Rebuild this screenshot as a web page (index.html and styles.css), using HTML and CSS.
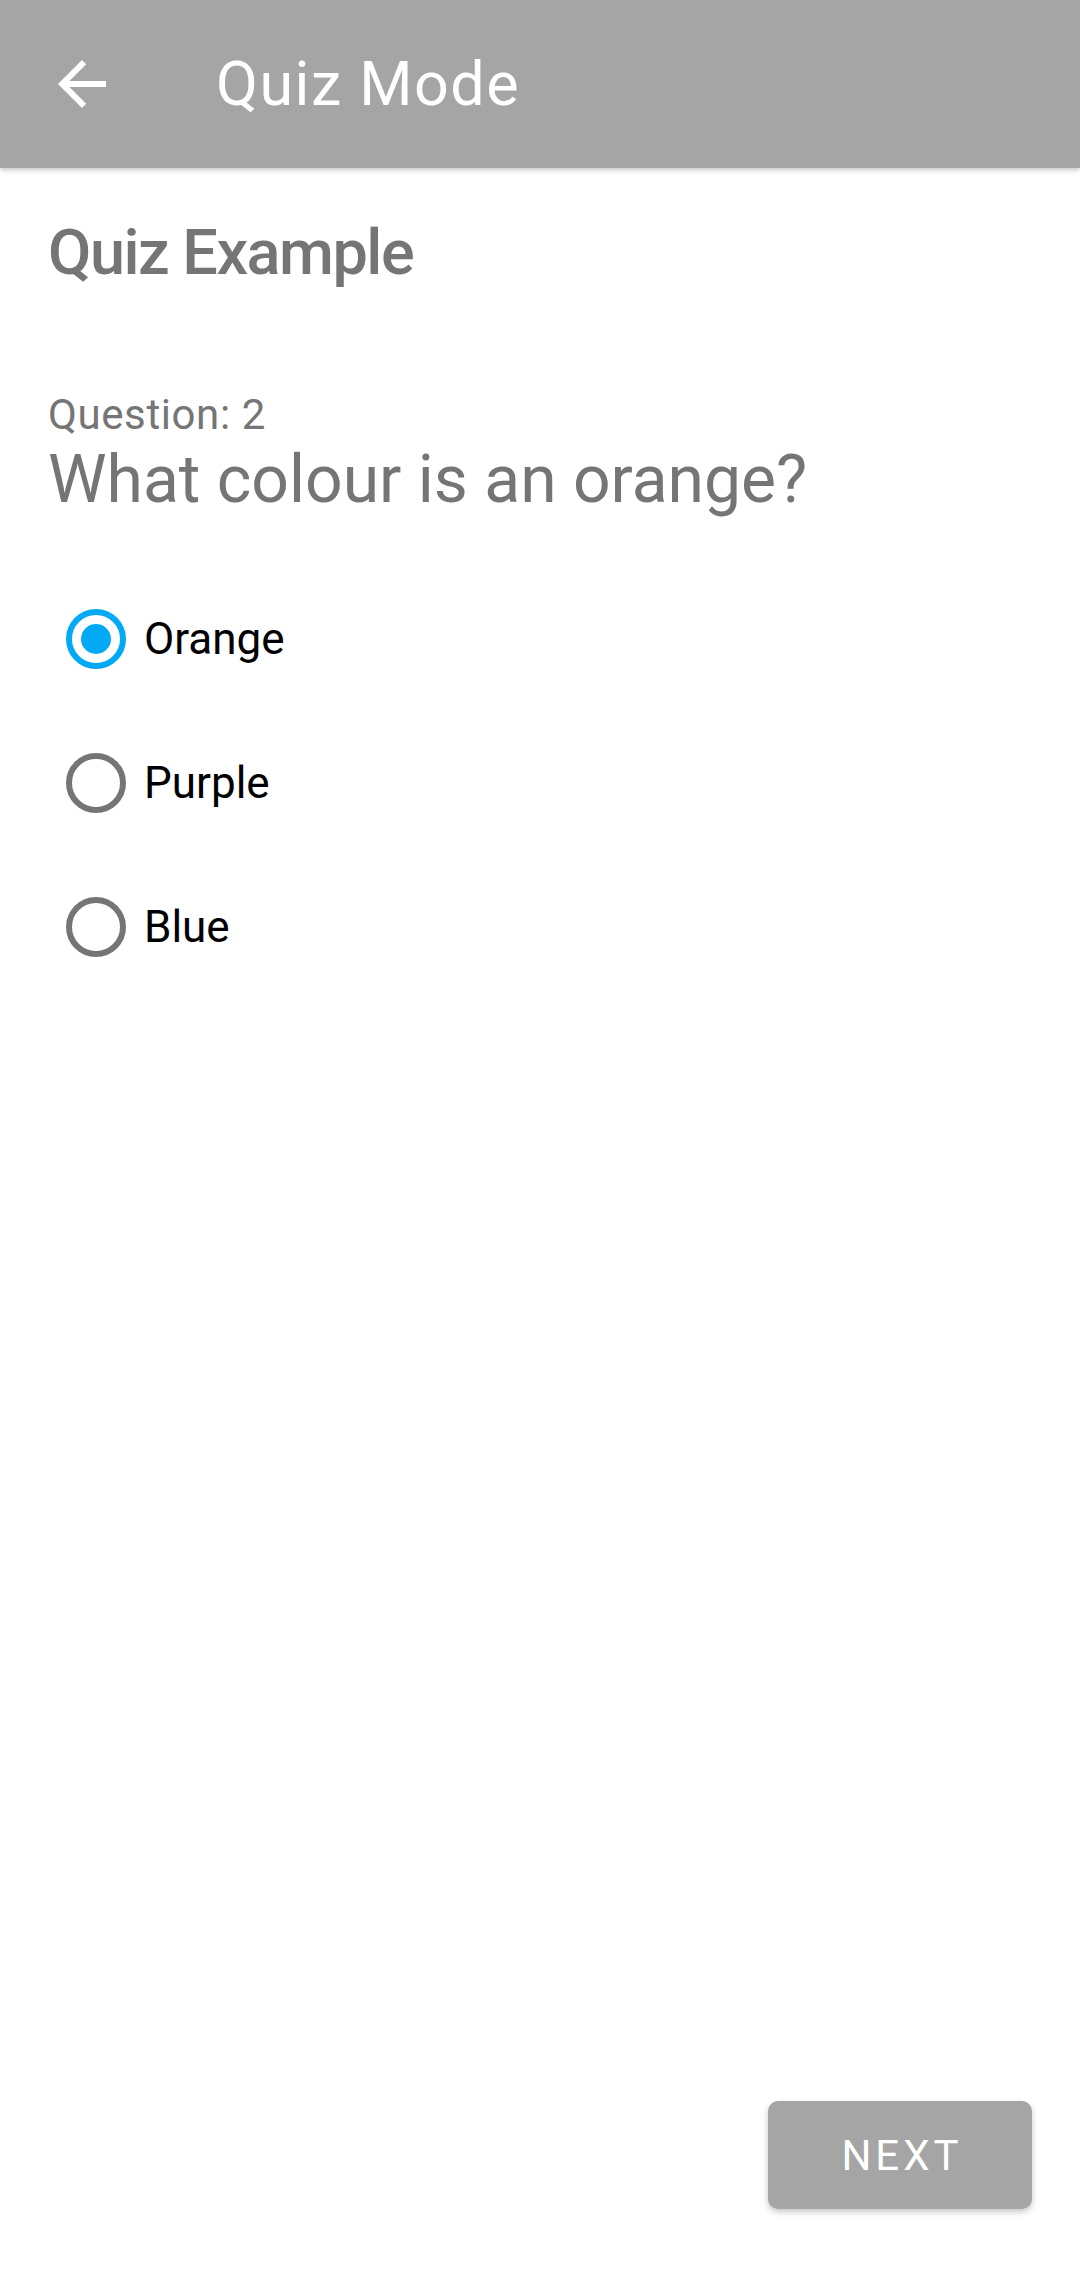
FILE: index.html
```html
<!DOCTYPE html>
<html>
<head>
<meta charset="utf-8">
<link rel="stylesheet" href="styles.css">
</head>
<body>
<div class="screen">
  <header class="appbar">
    <div class="nav-icon">
      <svg viewBox="0 0 24 24" width="72" height="72"><path fill="#fff" d="M20 11H7.83l5.59-5.59L12 4l-8 8 8 8 1.41-1.41L7.83 13H20v-2z"/></svg>
    </div>
    <div class="appbar-title">Quiz Mode</div>
  </header>
  <main class="content">
    <h1 class="quiz-title">Quiz Example</h1>
    <div class="q-label">Question: 2</div>
    <div class="q-text">What colour is an orange?</div>
    <div class="options">
      <div class="option"><span class="radio checked"><span class="dot"></span></span><span class="opt-label">Orange</span></div>
      <div class="option"><span class="radio"></span><span class="opt-label">Purple</span></div>
      <div class="option"><span class="radio"></span><span class="opt-label">Blue</span></div>
    </div>
  </main>
  <footer class="footer">
    <button class="next-btn">NEXT</button>
  </footer>
</div>
</body>
</html>
```
FILE: styles.css
```css
* { box-sizing: border-box; }
html, body { margin: 0; padding: 0; background: #fff; }
body { font-family: Roboto, "Noto Sans", sans-serif; }
.screen { width: 1080px; height: 2275px; display: flex; flex-direction: column; overflow: hidden; }
.appbar {
  height: 168px; background: #a5a5a5; display: flex; align-items: center;
  box-shadow: 0 2px 5px rgba(0,0,0,0.22); position: relative; z-index: 2; flex-shrink: 0;
}
.nav-icon { width: 72px; height: 72px; margin-left: 46px; display: flex; }
.appbar-title { margin-left: 98px; color: #fff; font-size: 61px; font-weight: 400; line-height: 1; letter-spacing: 1.5px; }
.content { flex: 1; padding: 0 48px; }
.quiz-title { margin: 45px 0 0; font-size: 63px; line-height: 80px; font-weight: 500; color: #757575; letter-spacing: -1.5px; }
.q-label { margin-top: 97px; font-size: 42px; line-height: 50px; color: #757575; letter-spacing: 0.6px; }
.q-text { margin-top: 0; font-size: 66px; line-height: 80px; color: #757575; letter-spacing: 0; }
.options { margin-top: 47px; display: flex; flex-direction: column; }
.option { height: 144px; display: flex; align-items: center; }
.radio {
  width: 60px; height: 60px; border-radius: 50%; border: 6px solid #757575;
  margin-left: 18px; display: flex; align-items: center; justify-content: center;
}
.radio.checked { border-color: #03a9f4; }
.dot { width: 30px; height: 30px; border-radius: 50%; background: #03a9f4; }
.opt-label { margin-left: 18px; font-size: 44px; color: #000; }
.footer { display: flex; justify-content: flex-end; padding: 0 48px 66px; flex-shrink: 0; }
.next-btn {
  width: 264px; height: 108px; border: none; border-radius: 10px; background: #a5a5a5;
  color: #fff; font-family: Roboto, sans-serif; font-size: 42px; font-weight: 400; letter-spacing: 4px;
  box-shadow: 0 3px 6px rgba(0,0,0,0.22);
  padding: 0 0 0 4px;
}
```
